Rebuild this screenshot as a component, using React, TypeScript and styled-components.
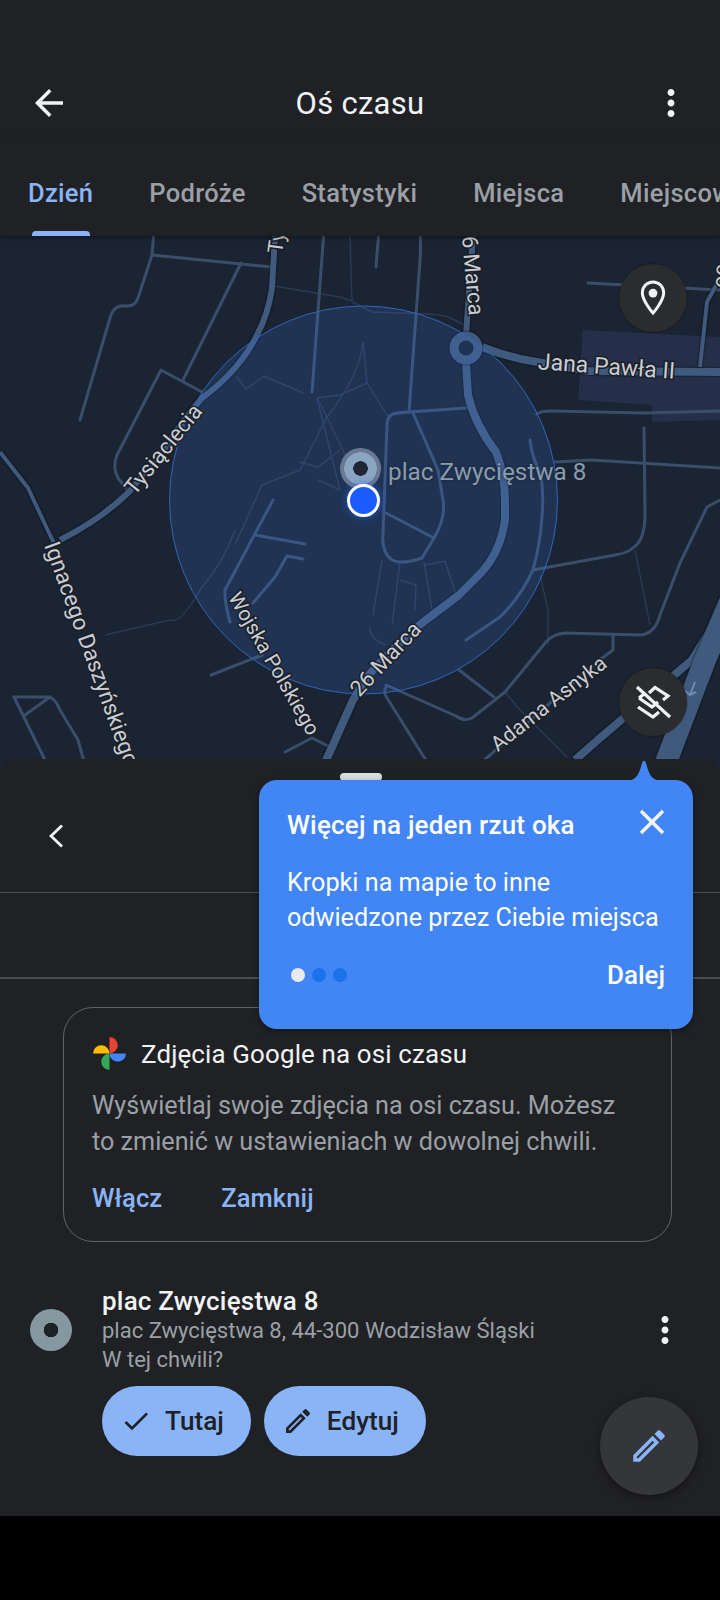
import styled, { createGlobalStyle } from "styled-components";

const GlobalStyle = createGlobalStyle`
  html, body {
    margin: 0;
    padding: 0;
    background: #000;
  }
  * {
    box-sizing: border-box;
  }
`;

const EDIT_PATH =
  "M14.06 9.02l.92.92L5.92 19H5v-.92l9.06-9.06M17.66 3c-.25 0-.51.1-.7.29l-1.83 1.83 3.75 3.75 1.83-1.83c.39-.39.39-1.02 0-1.41l-2.34-2.34c-.2-.2-.45-.29-.71-.29zm-3.6 3.19L3 17.25V21h3.75L17.81 9.94l-3.75-3.75z";
const MORE_PATH =
  "M12 8c1.1 0 2-.9 2-2s-.9-2-2-2-2 .9-2 2 .9 2 2 2zm0 2c-1.1 0-2 .9-2 2s.9 2 2 2 2-.9 2-2-.9-2-2-2zm0 6c-1.1 0-2 .9-2 2s.9 2 2 2 2-.9 2-2-.9-2-2-2z";

const tabs = ["Dzień", "Podróże", "Statystyki", "Miejsca", "Miejscowości"];

// thin streets, page coordinates (the svg viewBox starts at y=236)
const streets = [
  "M154 230 L152 255 L271 267",
  "M152 255 L138 298 Q135 307 126 306 Q114 304 110 318 L80 420",
  "M241 263 L183 380",
  "M202 392 L161 370 L117 455 Q112 468 118 478 L128 491",
  "M324 230 L312 392",
  "M379 230 L376 267",
  "M420 230 Q421 245 420 260 L409 412",
  "M466 408 L409 412 L397 413 Q387 414 387 425 L383 533 Q381 552 392 560 Q402 565 422 558 L434 538 L386 513",
  "M413 413 L438 470 L443 500 Q446 518 434 538",
  "M530 440 Q532 458 540 472 Q544 490 542 517 Q540 545 533 570 Q520 598 500 617 L466 640",
  "M537 414 Q540 411 552 411 L643 413 L720 411",
  "M555 462 L592 460 L720 468",
  "M644 428 L645 513 Q645 540 634 547 Q628 553 615 555 L533 570",
  "M588 283 L720 290",
  "M720 500 L707 507 L680 563 L660 615 Q655 634 640 635 L565 633 Q553 634 546 642 L505 692 L472 718 Q464 722 456 716 L386 685",
  "M459 670 L494 697",
  "M386 687 Q383 692 387 698 L427 762",
  "M613 635 L613 650 L601 659",
  "M601 659 L482 762",
  "M273 500 L225 590 Q224 600 230 622",
  "M255 535 L305 544",
  "M303 559 L287 556 L275 577 L253 603",
  "M211 675 L262 655",
  "M285 752 L312 738 L328 746",
  "M14 697 L50 697 Q56 700 60 710 L78 740 L85 765",
  "M14 697 L46 762",
  "M25 715 L50 697",
];

// faint footpaths
const paths = [
  "M274 286 L340 297 L352 301",
  "M350 236 L352 301",
  "M352 302 L372 312 L430 314 L446 316 L463 324",
  "M363 342 L367 383 L340 395 L317 398 L340 490 L318 480",
  "M236 376 L246 389 L264 376 L303 393",
  "M363 342 Q360 375 327 417 L300 470 L262 485 L235 545",
  "M317 398 L327 417 L345 455",
  "M367 383 L390 420",
  "M299 462 L318 467 L340 450",
  "M235 530 Q225 560 200 590 Q180 625 170 620 L105 635",
  "M382 560 L373 615",
  "M400 562 L392 625 M400 580 L416 585 L415 610",
  "M424 562 L432 610 M425 565 L445 561 L456 595",
  "M369 628 Q372 640 385 645",
  "M540 575 L548 610 L548 645",
  "M635 550 L650 625",
  "M505 692 L520 710 L567 757",
];

const labels = [
  { text: "Tysiąclecia", x: 169, y: 454, r: -51, anchor: "middle", size: 22 },
  { text: "Ignacego Daszyńskiego", x: 44, y: 545, r: 70, anchor: "start", size: 22.5 },
  { text: "Wojska Polskiego", x: 268, y: 667, r: 60, anchor: "middle", size: 20.5 },
  { text: "26 Marca", x: 391, y: 664, r: -47, anchor: "middle", size: 22 },
  { text: "Adama Asnyka", x: 553, y: 709, r: -38, anchor: "middle", size: 21 },
  { text: "Jana Pawła II", x: 606, y: 374, r: 4, anchor: "middle", size: 23 },
  { text: "26 Marca", x: 465, y: 270, r: 85, anchor: "middle", size: 22 },
  { text: "Tysiąclecia", x: 282, y: 254, r: -82, anchor: "start", size: 21 },
  { text: "oo", x: 727, y: 288, r: -88, anchor: "start", size: 21 },
];

const App = () => {
  return (
    <Page>
      <GlobalStyle />
      <AppBar>
        <Icon $size={42} viewBox="0 0 24 24">
          <path d="M20 11H7.83l5.59-5.59L12 4l-8 8 8 8 1.41-1.41L7.83 13H20v-2z" />
        </Icon>
        <Title>Oś czasu</Title>
        <Icon $size={42} viewBox="0 0 24 24">
          <path d={MORE_PATH} />
        </Icon>
      </AppBar>
      <Tabs>
        {tabs.map((tab, i) => (
          <Tab key={tab} $active={i === 0}>
            {tab}
          </Tab>
        ))}
      </Tabs>

      <MapArea>
        <MapSvg viewBox="0 236 720 539">
          <polygon points="583,330 720,337 720,420 652,422 652,405 578,400" fill="#252f4a" />
          {paths.map((d) => (
            <FootPath key={d} d={d} />
          ))}
          {streets.map((d) => (
            <Street key={d} d={d} />
          ))}
          <MajorRoad
            $width={6}
            d="M275 236 L272 288 Q268 315 257 335 Q240 370 202 398 Q175 430 170 442 L129 492 Q100 520 60 540"
          />
          <MajorRoad $width={4} d="M0 452 L28 488 L50 535 L55 545" />
          <MajorRoad $width={6} d="M473 236 L466 335" />
          <MajorRoad $width={8} d="M482 347 Q510 358 537 362 L588 371 L720 372" />
          <MajorRoad
            $width={8}
            d="M466 362 L468 395 Q475 425 496 452 Q505 475 505 500 L505 520 Q500 555 477 577 L459 595 L422 623 Q390 650 367 677 L353 700 L324 765"
          />
          <MajorRoad $width={4} d="M700 367 L707 302 L720 278" />
          <MajorRoad $width={8} d="M735 590 L692 660 L600 738 L575 760" />
          <MajorRoad $width={22} d="M735 590 L705 660 L665 765" />
          <Roundabout cx="466" cy="348" r="12" />
          <path d="M695 682 L690 695 L684 690 M690 695 L696 692" fill="none" stroke="#6d8bb3" strokeWidth="2" />
          <circle cx="363.5" cy="500" r="194" fill="rgba(66,133,244,0.17)" stroke="#2f66b8" strokeWidth="1" />
          {labels.map((label) => (
            <RoadLabel
              key={label.text + label.x}
              x={label.x}
              y={label.y}
              fontSize={label.size}
              textAnchor={label.anchor}
              transform={`rotate(${label.r} ${label.x} ${label.y})`}
            >
              {label.text}
            </RoadLabel>
          ))}
        </MapSvg>

        <PlaceMarker>
          <PlaceName>plac Zwycięstwa 8</PlaceName>
        </PlaceMarker>
        <MyLocation />

        <MapButton $top={28}>
          <svg width="42" height="42" viewBox="0 0 24 24">
            <path
              d="M12 2.8C8.6 2.8 5.9 5.5 5.9 9c0 4.7 6.1 11.6 6.1 11.6S18.1 13.7 18.1 9c0-3.5-2.7-6.2-6.1-6.2z"
              fill="none"
              stroke="#f1f3f4"
              strokeWidth="1.7"
            />
            <circle cx="12" cy="9.2" r="2.5" fill="#f1f3f4" />
          </svg>
        </MapButton>
        <MapButton $top={432}>
          <svg width="36" height="36" viewBox="0 0 36 36">
            <path
              d="M2 3 L35 33 M14 9 L20 3.5 L33 12 L28 16 M4 14 L9 10 M4 14 L17 23 L23 18 M3 23 L18 33 L24 28"
              fill="none"
              stroke="#f1f3f4"
              strokeWidth="3.2"
            />
          </svg>
        </MapButton>
      </MapArea>

      <Sheet>
        <Handle />
        <NavRow>
          <svg width="14" height="24" viewBox="0 0 14 24">
            <path d="M13 1.5 L2 12 L13 22.5" fill="none" stroke="#f1f3f4" strokeWidth="2.8" />
          </svg>
        </NavRow>
        <DateRow />

        <Card>
          <CardHeader>
            <svg width="33" height="33" viewBox="0 0 32 32">
              <path d="M16 16 V0 A8 8 0 0 1 16 16z" fill="#ea4335" />
              <path d="M16 16 H32 A8 8 0 0 1 16 16z" fill="#4285f4" />
              <path d="M16 16 V32 A8 8 0 0 1 16 16z" fill="#34a853" />
              <path d="M16 16 H0 A8 8 0 0 1 16 16z" fill="#fbbc04" />
            </svg>
            <CardTitle>Zdjęcia Google na osi czasu</CardTitle>
          </CardHeader>
          <CardText>
            Wyświetlaj swoje zdjęcia na osi czasu. Możesz
            <br />
            to zmienić w ustawieniach w dowolnej chwili.
          </CardText>
          <CardActions>
            <TextButton>Włącz</TextButton>
            <TextButton>Zamknij</TextButton>
          </CardActions>
        </Card>

        <VisitRow>
          <VisitDot />
          <VisitBody>
            <VisitTitle>plac Zwycięstwa 8</VisitTitle>
            <VisitLine>plac Zwycięstwa 8, 44-300 Wodzisław Śląski</VisitLine>
            <VisitLine>W tej chwili?</VisitLine>
            <VisitActions>
              <PillButton>
                <PillIcon viewBox="0 0 24 24">
                  <path d="M9 16.17L4.83 12l-1.42 1.41L9 19 21 7l-1.41-1.41z" />
                </PillIcon>
                Tutaj
              </PillButton>
              <PillButton>
                <PillIcon viewBox="0 0 24 24">
                  <path d={EDIT_PATH} />
                </PillIcon>
                Edytuj
              </PillButton>
            </VisitActions>
          </VisitBody>
          <VisitMenu>
            <Icon $size={42} viewBox="0 0 24 24">
              <path d={MORE_PATH} />
            </Icon>
          </VisitMenu>
        </VisitRow>

        <Fab>
          <Icon $size={42} $color="#8ab4f8" viewBox="0 0 24 24">
            <path d={EDIT_PATH} />
          </Icon>
        </Fab>

        <Tip>
          <TipArrow viewBox="0 0 34 21">
            <path d="M0 21 C10 20 12 14 15 3 Q17 -2 19 3 C22 14 24 20 34 21z" />
          </TipArrow>
          <TipHeader>
            <TipTitle>Więcej na jeden rzut oka</TipTitle>
            <Icon $size={42} viewBox="0 0 24 24">
              <path d="M19 6.41L17.59 5 12 10.59 6.41 5 5 6.41 10.59 12 5 17.59 6.41 19 12 13.41 17.59 19 19 17.59 13.41 12z" />
            </Icon>
          </TipHeader>
          <TipText>
            Kropki na mapie to inne
            <br />
            odwiedzone przez Ciebie miejsca
          </TipText>
          <TipFooter>
            <Dots>
              <Dot $active />
              <Dot />
              <Dot />
            </Dots>
            <TipNext>Dalej</TipNext>
          </TipFooter>
        </Tip>
      </Sheet>
      <NavBar />
    </Page>
  );
};

export default App;

const Page = styled.div`
  width: 720px;
  height: 1600px;
  display: flex;
  flex-direction: column;
  overflow: hidden;
  background: #000;
  font-family: Roboto, "Liberation Sans", sans-serif;
`;

const Icon = styled.svg<{ $size: number; $color?: string }>`
  width: ${(p) => p.$size}px;
  height: ${(p) => p.$size}px;
  flex-shrink: 0;
  fill: ${(p) => p.$color || "#f1f3f4"};
`;

const AppBar = styled.div`
  height: 138px;
  padding: 68px 28px 0;
  display: flex;
  align-items: center;
  justify-content: space-between;
  background: #202124;
`;

const Title = styled.div`
  font-size: 31px;
  color: #f1f3f4;
  letter-spacing: 0.3px;
`;

const Tabs = styled.div`
  height: 98px;
  padding-left: 28px;
  display: flex;
  gap: 56px;
  overflow: hidden;
  background: #202124;
  box-shadow: 0 2px 4px rgba(0, 0, 0, 0.4);
  position: relative;
  z-index: 2;
`;

const Tab = styled.div<{ $active?: boolean }>`
  position: relative;
  padding-top: 37px;
  font-size: 25.5px;
  line-height: 36px;
  font-weight: 470;
  white-space: nowrap;
  letter-spacing: 0.3px;
  color: ${(p) => (p.$active ? "#8ab4f8" : "#9aa0a6")};

  &::after {
    content: "";
    display: ${(p) => (p.$active ? "block" : "none")};
    position: absolute;
    left: 4px;
    right: 3px;
    bottom: 0;
    height: 5px;
    border-radius: 4px 4px 0 0;
    background: #8ab4f8;
  }
`;

const MapArea = styled.div`
  position: relative;
  height: 539px;
  flex-shrink: 0;
  background: #1a2433;
  overflow: hidden;
`;

const MapSvg = styled.svg`
  display: block;
  width: 720px;
  height: 539px;
`;

const Street = styled.path`
  fill: none;
  stroke: #394e6b;
  stroke-width: 3;
  stroke-linejoin: round;
  stroke-linecap: round;
`;

const FootPath = styled.path`
  fill: none;
  stroke: #2b3a52;
  stroke-width: 1.4;
  stroke-linejoin: round;
`;

const MajorRoad = styled.path<{ $width: number }>`
  fill: none;
  stroke: #405a7e;
  stroke-width: ${(p) => p.$width}px;
  stroke-linejoin: round;
  filter: drop-shadow(0 0 1px #05080d);
`;

const Roundabout = styled.circle`
  fill: #1a2433;
  stroke: #405a7e;
  stroke-width: 9;
  filter: drop-shadow(0 0 1px #05080d);
`;

const RoadLabel = styled.text`
  font-family: Roboto, "Liberation Sans", sans-serif;
  fill: #c9cdd3;
  stroke: #1b1f27;
  stroke-width: 3px;
  paint-order: stroke;
`;

const PlaceMarker = styled.div`
  position: absolute;
  left: 340px;
  top: 212px;
  width: 41px;
  height: 41px;
  border-radius: 50%;
  background: radial-gradient(circle, #1f2533 0 7px, #8aa5c2 7.5px 16px, #6b7894 16.5px);
`;

const PlaceName = styled.span`
  position: absolute;
  left: 48px;
  top: 9px;
  font-size: 24.3px;
  line-height: 30px;
  white-space: nowrap;
  color: #8a9cae;
  text-shadow: 0 0 3px #1a2433;
`;

const MyLocation = styled.div`
  position: absolute;
  left: 347px;
  top: 248px;
  width: 33px;
  height: 33px;
  border-radius: 50%;
  border: 3px solid #fff;
  background: #1a5cff;
  box-shadow: 0 0 8px rgba(40, 100, 255, 0.7);
`;

const MapButton = styled.div<{ $top: number }>`
  position: absolute;
  left: 619px;
  top: ${(p) => p.$top}px;
  width: 68px;
  height: 68px;
  border-radius: 50%;
  display: flex;
  align-items: center;
  justify-content: center;
  background: #2b2c2e;
  box-shadow: 0 0 2px rgba(0, 0, 0, 0.5);
`;

const Sheet = styled.div`
  position: relative;
  height: 757px;
  margin-top: -16px;
  flex-shrink: 0;
  border-radius: 16px 16px 0 0;
  background: #202124;
`;

const Handle = styled.div`
  position: absolute;
  left: 340px;
  top: 14px;
  width: 42px;
  height: 8px;
  border-radius: 4px;
  background: #dadce0;
`;

const NavRow = styled.div`
  height: 134px;
  padding: 65px 0 0 49px;
  border-bottom: 1px solid #4a4b4f;
`;

const DateRow = styled.div`
  height: 86px;
  border-bottom: 2px solid #4a4b4f;
`;

const Card = styled.div`
  width: 609px;
  height: 235px;
  margin: 28px 0 0 63px;
  padding: 29px 28px 0;
  border: 1px solid #5f6368;
  border-radius: 30px;
`;

const CardHeader = styled.div`
  display: flex;
  align-items: center;
  gap: 15px;
  padding-left: 1px;
`;

const CardTitle = styled.div`
  font-size: 25.9px;
  color: #f1f3f4;
  letter-spacing: 0.15px;
`;

const CardText = styled.div`
  margin-top: 18px;
  font-size: 25.2px;
  line-height: 36px;
  color: #9aa0a6;
  white-space: nowrap;
`;

const CardActions = styled.div`
  margin-top: 20px;
  display: flex;
  gap: 59px;
`;

const TextButton = styled.div`
  font-size: 25.5px;
  line-height: 36px;
  font-weight: 480;
  letter-spacing: 0.1px;
  color: #8ab4f8;
`;

const VisitRow = styled.div`
  margin-top: 43px;
  padding: 0 34px 0 30px;
  display: flex;
  align-items: flex-start;
`;

const VisitDot = styled.div`
  width: 42px;
  height: 42px;
  margin-top: 24px;
  flex-shrink: 0;
  border-radius: 50%;
  background: radial-gradient(circle, #202124 0 7px, #84999f 7.5px);
`;

const VisitBody = styled.div`
  flex: 1;
  margin-left: 30px;
`;

const VisitTitle = styled.div`
  font-size: 26px;
  line-height: 32px;
  font-weight: 480;
  letter-spacing: 0.2px;
  color: #f1f3f4;
`;

const VisitLine = styled.div`
  font-size: 22px;
  line-height: 28.5px;
  color: #9aa0a6;
`;

const VisitActions = styled.div`
  margin-top: 12px;
  display: flex;
  gap: 13px;
`;

const VisitMenu = styled.div`
  margin-top: 24px;
`;

const PillButton = styled.div`
  height: 70px;
  padding: 0 27px 0 18px;
  display: flex;
  align-items: center;
  gap: 13px;
  border-radius: 35px;
  font-size: 26.2px;
  font-weight: 470;
  color: #202124;
  background: #8ab4f8;
`;

const PillIcon = styled.svg`
  width: 32px;
  height: 32px;
  fill: #202124;
`;

const Fab = styled.div`
  position: absolute;
  right: 22px;
  bottom: 21px;
  width: 98px;
  height: 98px;
  border-radius: 50%;
  display: flex;
  align-items: center;
  justify-content: center;
  background: #35363a;
  box-shadow: 0 3px 8px rgba(0, 0, 0, 0.4);
`;

const Tip = styled.div`
  position: absolute;
  left: 259px;
  top: 21px;
  width: 434px;
  height: 249px;
  padding: 21px 20px 0 28px;
  border-radius: 18px;
  color: #fff;
  background: #4285f4;
  box-shadow: 0 2px 6px rgba(0, 0, 0, 0.35);
`;

const TipArrow = styled.svg`
  position: absolute;
  left: 368px;
  top: -20px;
  width: 34px;
  height: 21px;
  fill: #4285f4;
`;

const TipHeader = styled.div`
  display: flex;
  align-items: flex-start;
  justify-content: space-between;
`;

const TipTitle = styled.div`
  padding-top: 3px;
  font-size: 26px;
  line-height: 42px;
  font-weight: 480;
  letter-spacing: 0.2px;
`;

const TipText = styled.div`
  margin-top: 19px;
  font-size: 25.2px;
  line-height: 35px;
  white-space: nowrap;
`;

const TipFooter = styled.div`
  margin-top: 22px;
  padding: 0 8px 0 4px;
  display: flex;
  align-items: center;
  justify-content: space-between;
`;

const Dots = styled.div`
  display: flex;
  gap: 7px;
`;

const Dot = styled.div<{ $active?: boolean }>`
  width: 14px;
  height: 14px;
  border-radius: 50%;
  background: ${(p) => (p.$active ? "#e8eaed" : "#1a73e8")};
`;

const TipNext = styled.div`
  font-size: 26px;
  line-height: 36px;
  font-weight: 480;
`;

const NavBar = styled.div`
  flex: 1;
  background: #000;
`;
